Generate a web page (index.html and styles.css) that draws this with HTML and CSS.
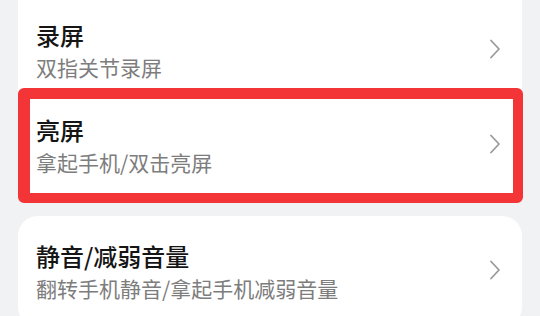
FILE: index.html
```html
<!DOCTYPE html>
<html lang="zh-CN">
<head>
<meta charset="utf-8">
<link rel="stylesheet" href="styles.css">
</head>
<body>
<div class="page">
  <div class="card card-top">
    <div class="row">
      <div class="texts">
        <div class="title">录屏</div>
        <div class="sub">双指关节录屏</div>
      </div>
      <svg class="chev" viewBox="0 0 12 20" width="12" height="20"><path d="M2 1.5 L10 10 L2 18.5" fill="none" stroke="#9a9a9a" stroke-width="1.8" stroke-linecap="round" stroke-linejoin="round"/></svg>
    </div>
    <div class="row highlighted">
      <div class="texts">
        <div class="title">亮屏</div>
        <div class="sub">拿起手机/双击亮屏</div>
      </div>
      <svg class="chev" viewBox="0 0 12 20" width="12" height="20"><path d="M2 1.5 L10 10 L2 18.5" fill="none" stroke="#9a9a9a" stroke-width="1.8" stroke-linecap="round" stroke-linejoin="round"/></svg>
    </div>
  </div>
  <div class="card">
    <div class="row">
      <div class="texts">
        <div class="title">静音/减弱音量</div>
        <div class="sub">翻转手机静音/拿起手机减弱音量</div>
      </div>
      <svg class="chev" viewBox="0 0 12 20" width="12" height="20"><path d="M2 1.5 L10 10 L2 18.5" fill="none" stroke="#9a9a9a" stroke-width="1.8" stroke-linecap="round" stroke-linejoin="round"/></svg>
    </div>
  </div>
</div>
</body>
</html>
```
FILE: styles.css
```css
html, body {
  margin: 0;
  padding: 0;
  background: #f1f2f4;
  font-family: "Noto Sans CJK SC", "Noto Sans", sans-serif;
  overflow: hidden;
}
.page {
  display: flex;
  flex-direction: column;
  gap: 15px;
  padding: 0 18px;
  width: 540px;
  box-sizing: border-box;
}
.card {
  background: #ffffff;
  border-radius: 20px;
  padding: 8px 0;
}
.card-top {
  border-radius: 0 0 20px 20px;
  padding-top: 3px;
}
.row {
  height: 95px;
  display: flex;
  align-items: center;
  justify-content: space-between;
  padding: 0 21px 0 18px;
  box-sizing: border-box;
}
.texts {
  display: flex;
  flex-direction: column;
  gap: 2px;
}
.title {
  font-size: 24px;
  line-height: 30px;
  font-weight: 500;
  color: #151515;
}
.sub {
  font-size: 21px;
  line-height: 30px;
  color: #7d7d7d;
}
.chev {
  display: block;
  margin-top: -4px;
}
.highlighted {
  position: relative;
}
.highlighted::after {
  content: "";
  position: absolute;
  top: -10px;
  bottom: -10px;
  left: 0;
  right: -1px;
  border-style: solid;
  border-color: #f43538;
  border-width: 11px 10px 10px 12px;
  border-radius: 6px;
}
```
